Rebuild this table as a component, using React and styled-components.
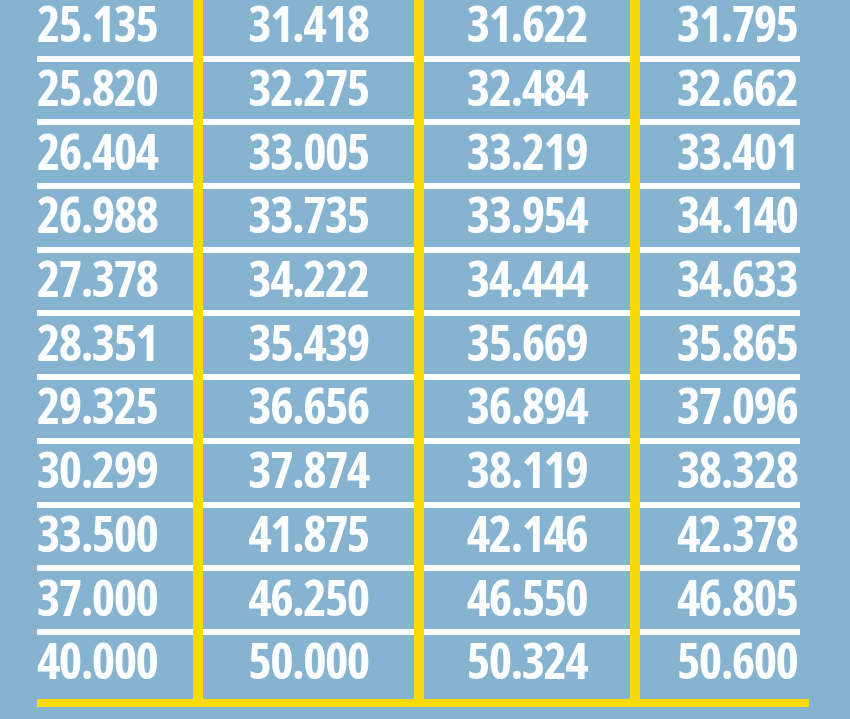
import styled, { createGlobalStyle } from "styled-components";

const Color = {
  Sky: "#86b4d0",
  Yellow: "#f7da07",
  White: "#fbfdfe",
};

const rows = [
  ["25.135", "31.418", "31.622", "31.795"],
  ["25.820", "32.275", "32.484", "32.662"],
  ["26.404", "33.005", "33.219", "33.401"],
  ["26.988", "33.735", "33.954", "34.140"],
  ["27.378", "34.222", "34.444", "34.633"],
  ["28.351", "35.439", "35.669", "35.865"],
  ["29.325", "36.656", "36.894", "37.096"],
  ["30.299", "37.874", "38.119", "38.328"],
  ["33.500", "41.875", "42.146", "42.378"],
  ["37.000", "46.250", "46.550", "46.805"],
  ["40.000", "50.000", "50.324", "50.600"],
];

// width, text alignment and left padding of each column
const columns = [
  { width: 156, align: "left", pad: 0 },
  { width: 211, align: "center", pad: 0 },
  { width: 206, align: "center", pad: 0 },
  { width: 160, align: "left", pad: 37 },
];

const GlobalStyle = createGlobalStyle`
  html, body {
    margin: 0;
    padding: 0;
    background-color: ${Color.Sky};
    overflow: hidden;
  }
`;

const App = () => {
  return (
    <Page>
      <GlobalStyle />
      <Table>
        <Columns>
          {columns.map((col, c) => (
            <Column key={c} $width={col.width} $last={c === columns.length - 1}>
              {rows.map((row, r) => (
                <Cell
                  key={r}
                  $align={col.align}
                  $pad={col.pad}
                  $last={r === rows.length - 1}
                >
                  {row[c]}
                </Cell>
              ))}
            </Column>
          ))}
        </Columns>
        <BottomLine />
      </Table>
    </Page>
  );
};

const Page = styled.div`
  background-color: ${Color.Sky};
  width: 850px;
  height: 719px;
  overflow: hidden;
`;

const Table = styled.div`
  margin-left: 37px;
  margin-top: -2px;
  width: 772px;
  display: flex;
  flex-direction: column;
`;

const Columns = styled.div`
  display: flex;
`;

const Column = styled.div`
  width: ${(props) => props.$width}px;
  display: flex;
  flex-direction: column;
  border-right: ${(props) => (props.$last ? "none" : `10px solid ${Color.Yellow}`)};
`;

const Cell = styled.div`
  box-sizing: border-box;
  height: 63.7px;
  padding-bottom: 7px;
  border-bottom: 6px solid
    ${(props) => (props.$last ? "transparent" : Color.White)};
  display: flex;
  align-items: center;
  justify-content: ${(props) => (props.$align === "center" ? "center" : "flex-start")};
  padding-left: ${(props) => props.$pad}px;
  color: ${Color.White};
  font-family: "Open Sans", "Roboto", sans-serif;
  font-stretch: 75%;
  font-weight: 700;
  font-size: 50px;
  letter-spacing: -1.6px;
  line-height: 1;
  white-space: nowrap;
`;

const BottomLine = styled.div`
  height: 8px;
  background-color: ${Color.Yellow};
`;

export default App;
